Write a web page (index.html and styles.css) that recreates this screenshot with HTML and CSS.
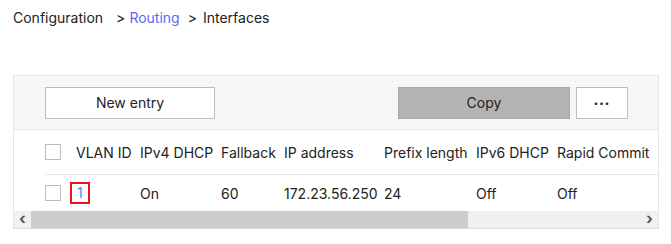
FILE: index.html
```html
<!DOCTYPE html>
<html lang="en">
<head>
  <meta charset="UTF-8" />
  <meta name="viewport" content="width=device-width, initial-scale=1.0"/>
  <title>Interfaces</title>
  <link rel="stylesheet" href="styles.css">
</head>
<body>
  <div class="breadcrumb">
    <span class="crumb">Configuration</span>
    <span class="sep first">&gt;</span>
    <a class="crumb link" href="#">Routing</a>
    <span class="sep">&gt;</span>
    <span class="crumb">Interfaces</span>
  </div>

  <div class="panel">
    <div class="toolbar">
      <button class="btn new">New entry</button>
      <div class="spacer"></div>
      <button class="btn copy">Copy</button>
      <button class="btn more">&bull;&bull;&bull;</button>
    </div>

    <div class="table-wrap">
      <div class="grid head">
        <div class="cell"><span class="check"></span></div>
        <div class="cell">VLAN ID</div>
        <div class="cell">IPv4 DHCP</div>
        <div class="cell">Fallback</div>
        <div class="cell">IP address</div>
        <div class="cell">Prefix length</div>
        <div class="cell">IPv6 DHCP</div>
        <div class="cell">Rapid Commit</div>
        <div class="cell"></div>
      </div>
      <div class="grid row">
        <div class="cell"><span class="check"></span></div>
        <div class="cell"><a class="vlan" href="#">1</a></div>
        <div class="cell">On</div>
        <div class="cell">60</div>
        <div class="cell">172.23.56.250</div>
        <div class="cell">24</div>
        <div class="cell">Off</div>
        <div class="cell">Off</div>
        <div class="cell"></div>
      </div>
    </div>

    <div class="scrollbar">
      <span class="arrow">&lsaquo;</span>
      <div class="track"><div class="thumb"></div></div>
      <span class="arrow">&rsaquo;</span>
    </div>
  </div>
</body>
</html>
```

FILE: styles.css
```css
body {
  margin: 0;
  padding: 0 13px;
  font-family: 'Inter', 'Noto Sans', sans-serif;
  font-size: 14px;
  color: #222;
  background: #fff;
}

.breadcrumb {
  height: 35px;
  display: flex;
  align-items: center;
  white-space: nowrap;
}

.crumb {
  color: #222;
  text-decoration: none;
}

.crumb.link {
  color: #5a6cf0;
}

.sep {
  margin: 0 6px 0 8px;
}

.sep.first {
  margin-left: 13px;
  margin-right: 4px;
}

.panel {
  margin-top: 40px;
  width: 644px;
  border: 1px solid #e6e6e6;
  border-bottom-color: #dcdcdc;
  overflow: hidden;
}

.toolbar {
  display: flex;
  align-items: center;
  height: 53px;
  padding: 0 30px 0 31px;
  background: #f7f7f7;
  border-bottom: 1px solid #e6e6e6;
}

.spacer {
  flex: 1;
}

.btn {
  height: 32px;
  font-family: inherit;
  font-size: 14px;
  color: #222;
  background: #fff;
  border: 1px solid #bcbcbc;
  cursor: pointer;
}

.btn.new {
  width: 170px;
}

.btn.copy {
  width: 172px;
  background: #b3b3b3;
  border-color: #a8a8a8;
}

.btn.more {
  width: 52px;
  margin-left: 6px;
  font-size: 8px;
  letter-spacing: 1px;
}

.table-wrap {
  padding-left: 31px;
  overflow: hidden;
}

.grid {
  display: grid;
  grid-template-columns: 31px 64px 81px 63px 100px 92px 81px 110px 100px;
  align-items: center;
  white-space: nowrap;
}

.head {
  height: 44px;
  border-bottom: 1px solid #e6e6e6;
}

.row {
  height: 36px;
}

.check {
  display: block;
  width: 14px;
  height: 14px;
  border: 1px solid #bcbcbc;
  background: #fff;
}

.vlan {
  display: inline-block;
  margin-left: -6px;
  padding: 0 5px;
  line-height: 18px;
  color: #4a8fe8;
  text-decoration: none;
  border: 2px solid #e8141c;
}

.scrollbar {
  display: flex;
  height: 17px;
  background: #f0f0f0;
}

.arrow {
  width: 17px;
  line-height: 15px;
  text-align: center;
  font-size: 16px;
  font-weight: bold;
  color: #555;
}

.track {
  flex: 1;
}

.thumb {
  width: 437px;
  height: 100%;
  background: #cdcdcd;
}
```
